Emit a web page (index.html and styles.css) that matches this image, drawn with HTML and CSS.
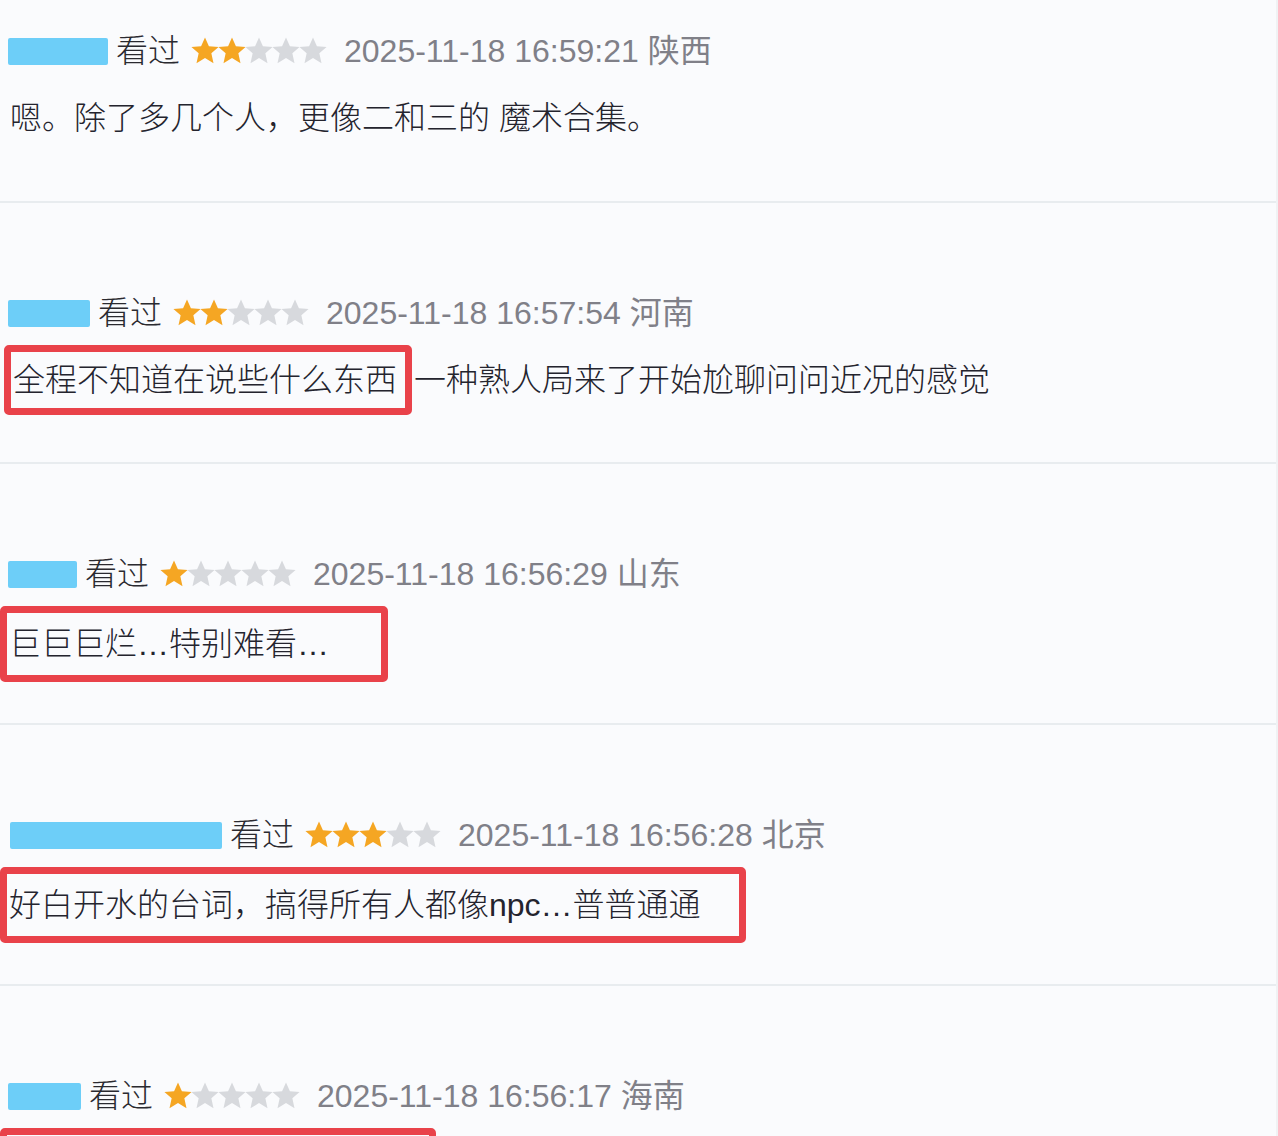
FILE: index.html
```html
<!DOCTYPE html>
<html lang="zh-CN">
<head>
    <meta charset="UTF-8">
    <meta name="viewport" content="width=device-width, initial-scale=1.0">
    <title>短评</title>
    <link rel="stylesheet" href="styles.css">
</head>
<body>
    <svg class="defs" width="0" height="0">
        <symbol id="star" viewBox="0 0 26 26">
            <polygon points="13,0.5 16.64,8.5 25.6,9.2 18.9,15.2 20.9,24.4 13,19.6 5.1,24.4 7.1,15.2 0.4,9.2 9.36,8.5"/>
        </symbol>
    </svg>

    <div class="comments">
        <div class="comment">
            <div class="comment-info">
                <span class="user" style="width: 100px"></span>
                <span class="status">看过</span>
                <svg class="stars" width="137" height="28">
                    <use href="#star" x="0" width="28" height="28" class="on"/><use href="#star" x="27" width="28" height="28" class="on"/><use href="#star" x="54" width="28" height="28"/><use href="#star" x="81" width="28" height="28"/><use href="#star" x="108" width="28" height="28"/>
                </svg>
                <span class="time">2025-11-18 16:59:21 陕西</span>
            </div>
            <div class="comment-body">
                <span class="plain">嗯。除了多几个人，更像二和三的 魔术合集。</span>
            </div>
        </div>

        <div class="comment">
            <div class="comment-info">
                <span class="user" style="width: 82px"></span>
                <span class="status">看过</span>
                <svg class="stars" width="137" height="28">
                    <use href="#star" x="0" width="28" height="28" class="on"/><use href="#star" x="27" width="28" height="28" class="on"/><use href="#star" x="54" width="28" height="28"/><use href="#star" x="81" width="28" height="28"/><use href="#star" x="108" width="28" height="28"/>
                </svg>
                <span class="time">2025-11-18 16:57:54 河南</span>
            </div>
            <div class="comment-body">
                <span class="mark mark-shift">全程不知道在说些什么东西</span><span class="rest">一种熟人局来了开始尬聊问问近况的感觉</span>
            </div>
        </div>

        <div class="comment">
            <div class="comment-info">
                <span class="user" style="width: 69px"></span>
                <span class="status">看过</span>
                <svg class="stars" width="137" height="28">
                    <use href="#star" x="0" width="28" height="28" class="on"/><use href="#star" x="27" width="28" height="28"/><use href="#star" x="54" width="28" height="28"/><use href="#star" x="81" width="28" height="28"/><use href="#star" x="108" width="28" height="28"/>
                </svg>
                <span class="time">2025-11-18 16:56:29 山东</span>
            </div>
            <div class="comment-body">
                <span class="mark mark-roomy">巨巨巨烂…特别难看…</span>
            </div>
        </div>

        <div class="comment">
            <div class="comment-info info-indent">
                <span class="user" style="width: 212px"></span>
                <span class="status">看过</span>
                <svg class="stars" width="137" height="28">
                    <use href="#star" x="0" width="28" height="28" class="on"/><use href="#star" x="27" width="28" height="28" class="on"/><use href="#star" x="54" width="28" height="28" class="on"/><use href="#star" x="81" width="28" height="28"/><use href="#star" x="108" width="28" height="28"/>
                </svg>
                <span class="time">2025-11-18 16:56:28 北京</span>
            </div>
            <div class="comment-body">
                <span class="mark mark-wide">好白开水的台词，搞得所有人都像npc…普普通通</span>
            </div>
        </div>

        <div class="comment">
            <div class="comment-info">
                <span class="user" style="width: 73px"></span>
                <span class="status">看过</span>
                <svg class="stars" width="137" height="28">
                    <use href="#star" x="0" width="28" height="28" class="on"/><use href="#star" x="27" width="28" height="28"/><use href="#star" x="54" width="28" height="28"/><use href="#star" x="81" width="28" height="28"/><use href="#star" x="108" width="28" height="28"/>
                </svg>
                <span class="time">2025-11-18 16:56:17 海南</span>
            </div>
            <div class="comment-body">
                <span class="mark mark-last">&nbsp;</span>
            </div>
        </div>
    </div>
</body>
</html>
```

FILE: styles.css
```css
body { margin: 0; padding: 0; background-color: #fafbfd; color: #24242e; font-family: "Liberation Sans", "Noto Sans CJK SC", sans-serif; overflow: hidden; }
.defs { position: absolute; }
.comments { border-right: 2px solid #f0f2f4; }
.comment { box-sizing: border-box; height: 261px; padding-top: 92px; border-bottom: 2px solid #e8ecef; }
.comment:first-child { height: 203px; padding-top: 33px; }
.comment-info { display: flex; align-items: center; height: 36px; padding-left: 8px; font-size: 32px; }
.info-indent { padding-left: 10px; }
.user { display: inline-block; height: 27px; background-color: #6dcef8; border-radius: 2px; }
.status { margin-left: 8px; color: #2a2a30; line-height: 36px; font-weight: 300; }
.stars { margin-left: 11px; fill: #d7d9dd; }
.stars .on { fill: #f5a623; }
.time { margin-left: 16px; color: #808088; line-height: 36px; }
.comment-body { margin-top: 14px; font-size: 32px; line-height: 36px; white-space: nowrap; font-weight: 300; }
.plain { display: inline-block; padding: 17px 0 17px 10px; }
.mark { display: inline-block; border: 7px solid #e9424a; border-radius: 5px; padding: 10px 8px 10px 2px; }
.mark-shift { margin-left: 4px; }
.rest { margin-left: 2px; }
.mark-roomy { padding-top: 13px; padding-bottom: 13px; padding-right: 52px; }
.mark-wide { padding-top: 13px; padding-bottom: 13px; padding-right: 38px; }
.mark-last { width: 412px; }
```
